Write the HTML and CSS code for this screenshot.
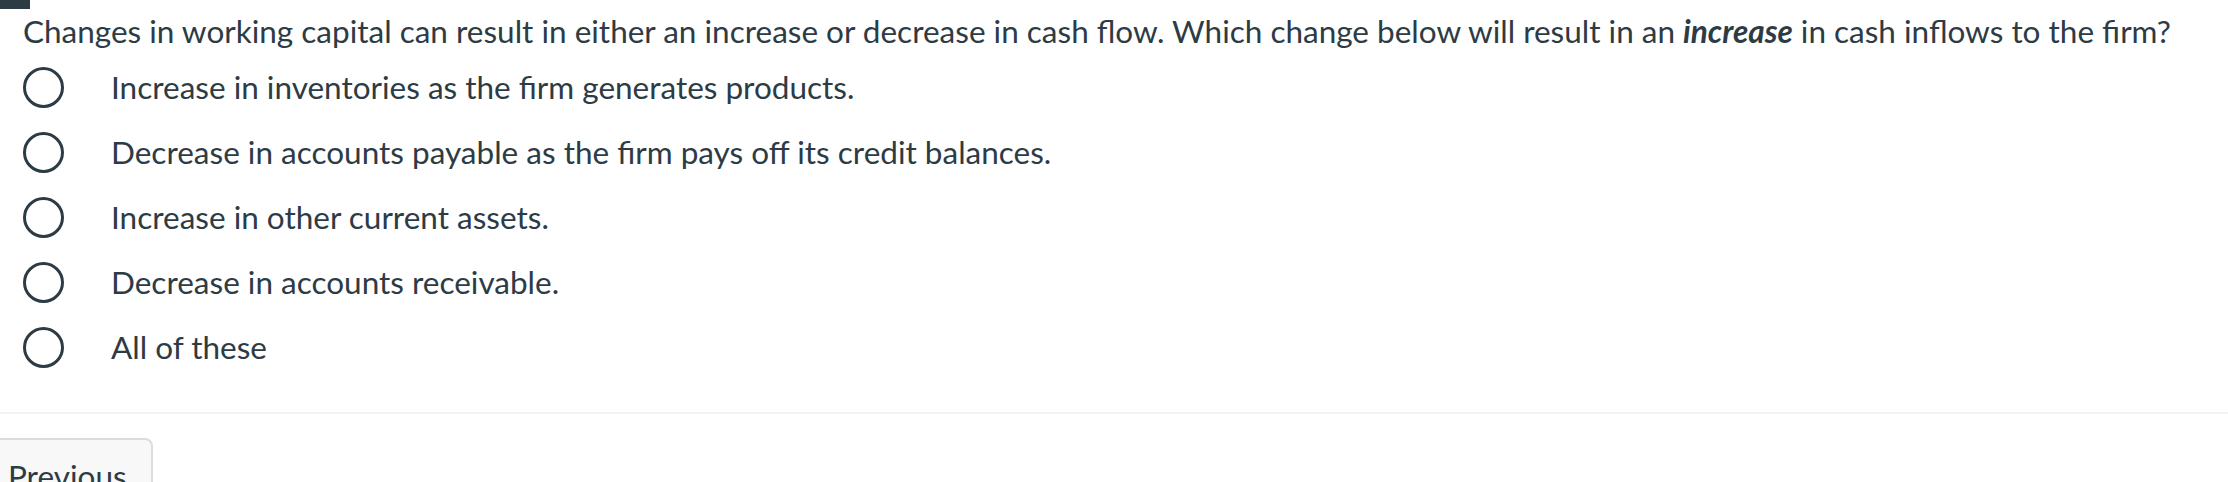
FILE: index.html
```html
<!DOCTYPE html>
<html>
<head>
<meta charset="utf-8">
<link rel="stylesheet" href="styles.css">
</head>
<body>
<div class="topbar"></div>
<div class="question">
  <p class="prompt">Changes in working capital can result in either an increase or decrease in cash flow. Which change below will result in an <strong><em>increase</em></strong> in cash inflows to the firm?</p>
  <div class="answers">
    <label class="answer"><span class="radio"></span><span class="label">Increase in inventories as the firm generates products.</span></label>
    <label class="answer"><span class="radio"></span><span class="label">Decrease in accounts payable as the firm pays off its credit balances.</span></label>
    <label class="answer"><span class="radio"></span><span class="label">Increase in other current assets.</span></label>
    <label class="answer"><span class="radio"></span><span class="label">Decrease in accounts receivable.</span></label>
    <label class="answer"><span class="radio"></span><span class="label">All of these</span></label>
  </div>
</div>
<div class="divider"></div>
<div class="nav">
  <button class="btn">Previous</button>
</div>
</body>
</html>
```
FILE: styles.css
```css
html, body {
  margin: 0;
  padding: 0;
  background: #ffffff;
}
body {
  font-family: Lato, "Noto Sans", sans-serif;
  color: #2d3b45;
  overflow: hidden;
}
.topbar {
  width: 30px;
  height: 9px;
  background: #2d3b45;
}
.question {
  padding-left: 23px;
}
.prompt {
  margin: 0;
  padding-top: 2px;
  font-size: 31.5px;
  line-height: 40px;
  white-space: nowrap;
}
.answers {
  display: flex;
  flex-direction: column;
  gap: 25px;
  margin-top: 16px;
}
.answer {
  display: flex;
  align-items: center;
  gap: 47px;
  height: 40px;
  font-size: 31.5px;
}
.radio {
  box-sizing: border-box;
  width: 41px;
  height: 41px;
  border: 3.5px solid #2d3b45;
  border-radius: 50%;
  flex: none;
}
.divider {
  margin-top: 45px;
  height: 2px;
  background: #f2f2f2;
}
.nav {
  padding-top: 24px;
}
.btn {
  margin-left: -10px;
  width: 163px;
  height: 60px;
  padding: 16px 0 0 16px;
  text-align: left;
  border: 2px solid #dcdcdc;
  border-radius: 8px;
  background: #f8f8f8;
  font-family: Lato, sans-serif;
  font-size: 31.5px;
  line-height: 38px;
  color: #2d3b45;
  vertical-align: top;
}
```
